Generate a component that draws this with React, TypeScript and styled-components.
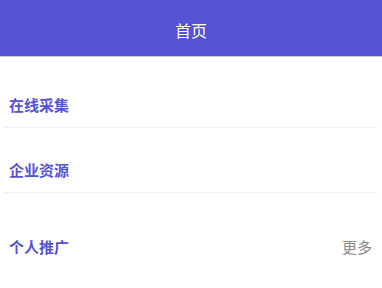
import React from "react";
import styled, { createGlobalStyle } from "styled-components";

const Global = createGlobalStyle`
  html, body { margin: 0; padding: 0; background: #ffffff; }
  body { font-family: "Noto Sans CJK SC", "Noto Sans", sans-serif; }
`;

const Page = styled.div`
  width: 382px;
  height: 288px;
  overflow: hidden;
  background: #ffffff;
  display: flex;
  flex-direction: column;
`;

const Header = styled.header`
  height: 57px;
  flex: none;
  box-sizing: border-box;
  background: #5552d6;
  border-bottom: 1px solid #c9c9d6;
  display: flex;
  align-items: center;
  justify-content: center;
  color: #ffffff;
  font-size: 16px;
  padding-top: 4px;
`;

const Section = styled.section<{ $top: number; $divider?: boolean }>`
  margin: ${(p) => p.$top}px 4px 0 4px;
  border-bottom: ${(p) => (p.$divider ? "1px solid #f0f0f2" : "none")};
`;

const TitleRow = styled.div`
  height: 44px;
  display: flex;
  align-items: center;
  justify-content: space-between;
  padding: 0 6px 2px 5px;
  box-sizing: border-box;
`;

const Title = styled.h2`
  margin: 0;
  font-size: 15px;
  font-weight: 700;
  color: #5652d6;
`;

const More = styled.span`
  font-size: 15px;
  color: #8a8a8a;
`;

export default function App() {
  return (
    <Page>
      <Global />
      <Header>首页</Header>
      <Section $top={26} $divider>
        <TitleRow>
          <Title>在线采集</Title>
        </TitleRow>
      </Section>
      <Section $top={20} $divider>
        <TitleRow>
          <Title>企业资源</Title>
        </TitleRow>
      </Section>
      <Section $top={32}>
        <TitleRow>
          <Title>个人推广</Title>
          <More>更多</More>
        </TitleRow>
      </Section>
    </Page>
  );
}
